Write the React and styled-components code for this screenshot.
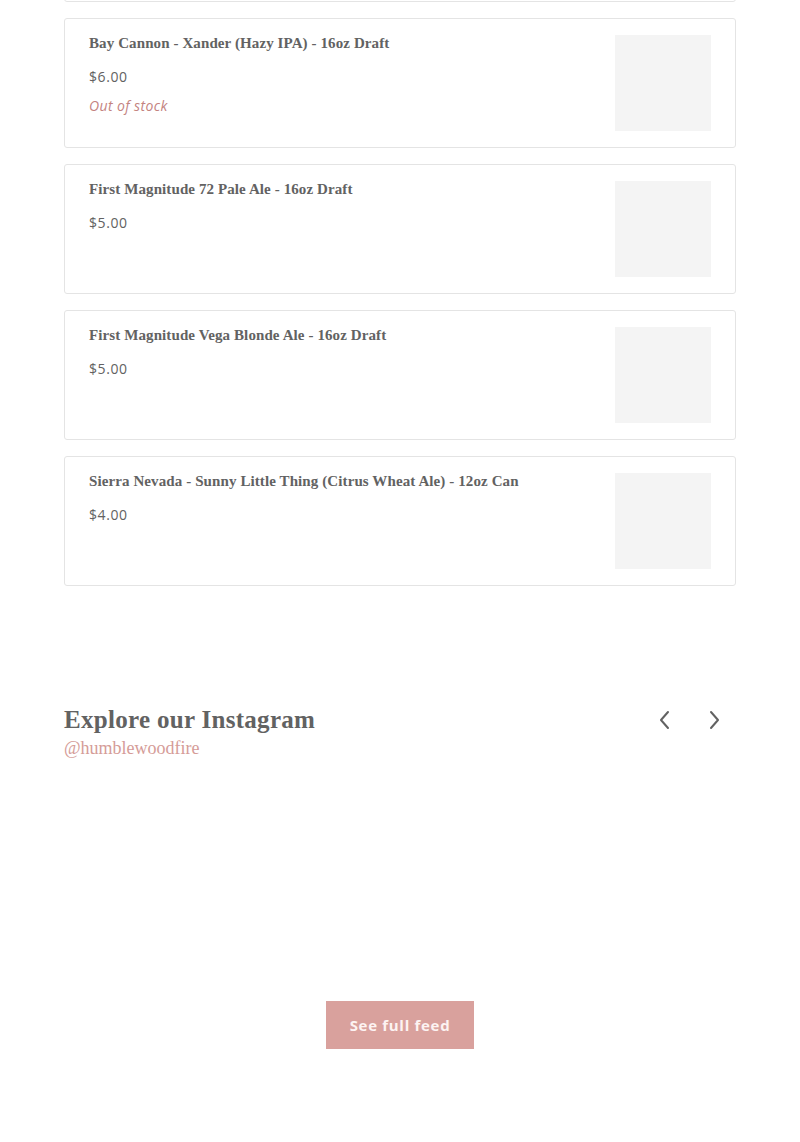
import React from "react";
import styled, { createGlobalStyle } from "styled-components";

const GlobalStyle = createGlobalStyle`
  html, body {
    margin: 0;
    padding: 0;
    background: #ffffff;
    overflow: hidden;
  }
  body {
    font-family: "Open Sans", "Liberation Sans", sans-serif;
    color: #5c5c5c;
  }
`;

const Page = styled.div`
  width: 800px;
  height: 1142px;
  overflow: hidden;
  padding: 0 64px;
  box-sizing: border-box;
`;

const ProductList = styled.div`
  display: flex;
  flex-direction: column;
  gap: 16px;
  margin-top: -128px;
`;

const Card = styled.div`
  display: flex;
  justify-content: space-between;
  height: 130px;
  box-sizing: border-box;
  padding: 16px 24px;
  border: 1px solid #e4e4e4;
  border-radius: 3px;
  background: #fff;
`;

const Info = styled.div`
  display: flex;
  flex-direction: column;
`;

const Title = styled.div`
  font-family: "Liberation Serif", "Times New Roman", serif;
  font-weight: 700;
  font-size: 15px;
  line-height: 16px;
  color: #626262;
  letter-spacing: 0.1px;
`;

const Price = styled.div`
  margin-top: 16px;
  font-size: 14px;
  line-height: 20px;
  color: #626262;
  letter-spacing: 0.6px;
`;

const Stock = styled.div`
  margin-top: 9px;
  font-size: 14px;
  line-height: 20px;
  font-style: italic;
  color: #c4837f;
  letter-spacing: 0.4px;
`;

const Thumb = styled.div`
  width: 96px;
  height: 96px;
  flex-shrink: 0;
  background: #f4f4f4;
`;

const Section = styled.section`
  margin-top: 120px;
`;

const HeaderRow = styled.div`
  display: flex;
  justify-content: space-between;
  align-items: flex-start;
`;

const Heading = styled.h2`
  margin: 0;
  font-family: "Liberation Serif", "Times New Roman", serif;
  font-weight: 700;
  font-size: 25px;
  line-height: 28px;
  color: #626262;
  letter-spacing: 0.3px;
`;

const Handle = styled.div`
  margin-top: 3px;
  font-family: "Liberation Serif", "Times New Roman", serif;
  font-size: 18px;
  line-height: 22px;
  color: #d59c98;
`;

const Arrows = styled.div`
  display: flex;
  gap: 17px;
  margin-top: -2px;
  margin-right: 6px;
`;

const ArrowButton = styled.button`
  width: 32px;
  height: 32px;
  border: none;
  background: none;
  padding: 0;
  display: flex;
  align-items: center;
  justify-content: center;
  color: #626262;
  cursor: pointer;
`;

const Feed = styled.div`
  height: 242px;
`;

const ButtonRow = styled.div`
  display: flex;
  justify-content: center;
`;

const FeedButton = styled.button`
  width: 148px;
  height: 48px;
  border: none;
  background: #d9a19d;
  color: #fdf3f2;
  font-family: "Open Sans", "Liberation Sans", sans-serif;
  font-weight: 700;
  font-size: 15px;
  letter-spacing: 0.7px;
`;

// first card is scrolled past the top edge, only its bottom border shows
const products = [
  { name: "", price: "" },
  { name: "Bay Cannon - Xander (Hazy IPA) - 16oz Draft", price: "$6.00", soldOut: true },
  { name: "First Magnitude 72 Pale Ale - 16oz Draft", price: "$5.00" },
  { name: "First Magnitude Vega Blonde Ale - 16oz Draft", price: "$5.00" },
  { name: "Sierra Nevada - Sunny Little Thing (Citrus Wheat Ale) - 12oz Can", price: "$4.00" },
];

const Chevron = ({ dir }) => (
  <svg width="16" height="20" viewBox="0 0 16 20" fill="none">
    <path
      d={dir === "left" ? "M11 2 L4 10 L11 18" : "M5 2 L12 10 L5 18"}
      stroke="currentColor"
      strokeWidth="2"
      strokeLinecap="round"
      strokeLinejoin="round"
    />
  </svg>
);

export default function App() {
  return (
    <>
      <GlobalStyle />
      <Page>
        <ProductList>
          {products.map((p, i) => (
            <Card key={i}>
              <Info>
                {p.name && <Title>{p.name}</Title>}
                {p.price && <Price>{p.price}</Price>}
                {p.soldOut && <Stock>Out of stock</Stock>}
              </Info>
              <Thumb />
            </Card>
          ))}
        </ProductList>
        <Section>
          <HeaderRow>
            <div>
              <Heading>Explore our Instagram</Heading>
              <Handle>@humblewoodfire</Handle>
            </div>
            <Arrows>
              <ArrowButton aria-label="Previous">
                <Chevron dir="left" />
              </ArrowButton>
              <ArrowButton aria-label="Next">
                <Chevron dir="right" />
              </ArrowButton>
            </Arrows>
          </HeaderRow>
          <Feed />
          <ButtonRow>
            <FeedButton>See full feed</FeedButton>
          </ButtonRow>
        </Section>
      </Page>
    </>
  );
}
